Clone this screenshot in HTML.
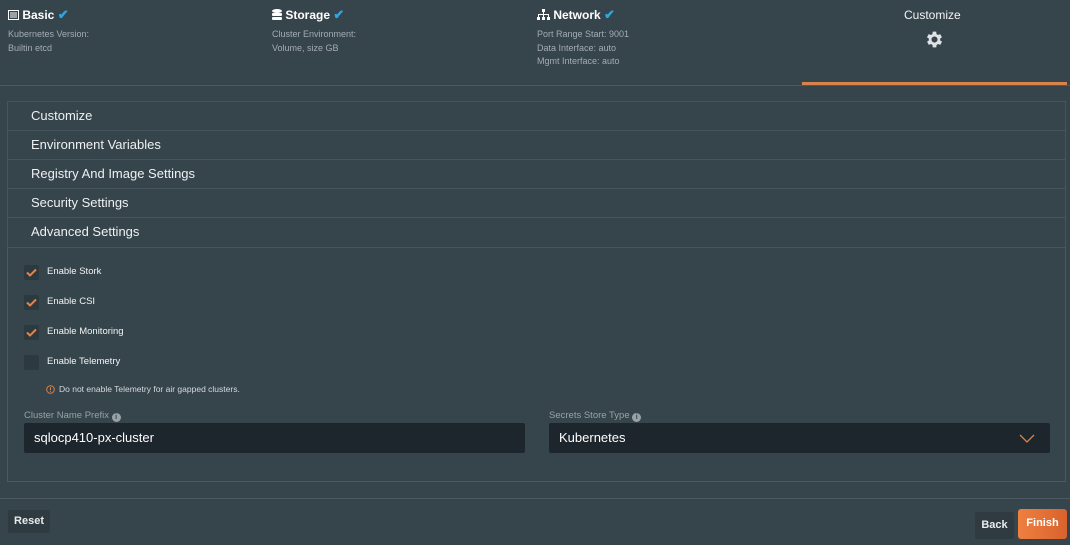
<!DOCTYPE html>
<html><head><style>
*{margin:0;padding:0;box-sizing:border-box}
body{width:1070px;height:545px;background:#36444c;font-family:"Liberation Sans",sans-serif;color:#e8ecee;position:relative;overflow:hidden}
.a{position:absolute}
.st{font-size:12px;font-weight:bold;color:#fff}
.sub{font-size:9px;color:#a4adb2;line-height:13.5px}
.chk{color:#2ea7e0;font-size:13px}
.row{position:absolute;left:7px;width:1059px;border:1px solid #46545c;border-bottom:none;height:29px;font-size:13px;padding:6px 0 0 23px;color:#eef1f2}
.cb{position:absolute;left:24px;width:15px;height:15px;background:#2c393f;border-radius:2px}
.cl{position:absolute;left:47px;font-size:9.5px;color:#f2f4f5}
.inp{position:absolute;top:423px;height:30px;background:#1c262c;border-radius:2px;font-size:13px;padding:7px 10px;color:#fff}
.lbl{position:absolute;top:410px;font-size:9.5px;color:#98a2a7}
.i{display:inline-block;width:9px;height:9px;border-radius:50%;background:#98a2a7;color:#36444c;font-size:7px;text-align:center;line-height:9px;font-weight:bold;vertical-align:-1px}
</style></head><body>
<div class="a st" style="left:8px;top:7px"><svg width="11" height="10" style="vertical-align:-1px"><rect x="0.5" y="0.5" width="10" height="9" fill="none" stroke="#fff"/><path d="M2 3h7M2 5h7M2 7h7" stroke="#fff"/></svg> Basic <span class="chk">✔</span></div>
<div class="a sub" style="left:8px;top:28px">Kubernetes Version:<br>Builtin etcd</div>
<div class="a st" style="left:272px;top:7px"><svg width="10" height="11" style="vertical-align:-1px"><ellipse cx="5" cy="2" rx="5" ry="2" fill="#fff"/><rect x="0" y="4" width="10" height="3" rx="1" fill="#fff"/><rect x="0" y="8" width="10" height="3" rx="1" fill="#fff"/></svg> Storage <span class="chk">✔</span></div>
<div class="a sub" style="left:272px;top:28px">Cluster Environment:<br>Volume, size GB</div>
<div class="a st" style="left:537px;top:7px"><svg width="13" height="11" style="vertical-align:-1px" fill="#fff"><rect x="5" y="0" width="3" height="3"/><rect x="6" y="3" width="1" height="3"/><rect x="1" y="5" width="11" height="1"/><rect x="1" y="5" width="1" height="3"/><rect x="11" y="5" width="1" height="3"/><rect x="0" y="8" width="3" height="3"/><rect x="5" y="8" width="3" height="3"/><rect x="10" y="8" width="3" height="3"/><rect x="6" y="6" width="1" height="2"/></svg> Network <span class="chk">✔</span></div>
<div class="a sub" style="left:537px;top:28px">Port Range Start: 9001<br>Data Interface: auto<br>Mgmt Interface: auto</div>
<div class="a" style="left:904px;top:8px;font-size:12px;color:#f2f4f5">Customize</div>
<svg class="a" style="left:924px;top:29px" width="21" height="21" viewBox="0 0 24 24"><path fill="#dfe3e5" d="M19.4 13a7.5 7.5 0 000-2l2.1-1.6-2-3.5-2.5 1a7.5 7.5 0 00-1.7-1L15 3h-4l-.4 2.9a7.5 7.5 0 00-1.7 1l-2.5-1-2 3.5L6.6 11a7.5 7.5 0 000 2l-2.1 1.6 2 3.5 2.5-1a7.5 7.5 0 001.7 1L11 21h4l.4-2.9a7.5 7.5 0 001.7-1l2.5 1 2-3.5zM13 15.5a3.5 3.5 0 110-7 3.5 3.5 0 010 7z" transform="translate(-1 0)"/></svg>
<div class="a" style="left:0;top:85px;width:1070px;height:1px;background:#4b5960"></div>
<div class="a" style="left:802px;top:82px;width:265px;height:3px;background:#d9824c"></div>
<div class="row" style="top:101px">Customize</div>
<div class="row" style="top:130px">Environment Variables</div>
<div class="row" style="top:159px">Registry And Image Settings</div>
<div class="row" style="top:188px">Security Settings</div>
<div class="row" style="top:217px;border-bottom:1px solid #46545c;height:31px">Advanced Settings</div>
<div class="a" style="left:7px;top:247px;width:1059px;height:235px;border:1px solid #4b5960;border-top:none"></div>
<div class="cb" style="top:265px"></div><svg class="a" style="left:26px;top:268px" width="11" height="9"><path d="M1 4.5l3 3 6-6" stroke="#e5834a" stroke-width="2" fill="none"/></svg><div class="cl" style="top:266px">Enable Stork</div>
<div class="cb" style="top:295px"></div><svg class="a" style="left:26px;top:298px" width="11" height="9"><path d="M1 4.5l3 3 6-6" stroke="#e5834a" stroke-width="2" fill="none"/></svg><div class="cl" style="top:296px">Enable CSI</div>
<div class="cb" style="top:325px"></div><svg class="a" style="left:26px;top:328px" width="11" height="9"><path d="M1 4.5l3 3 6-6" stroke="#e5834a" stroke-width="2" fill="none"/></svg><div class="cl" style="top:326px">Enable Monitoring</div>
<div class="cb" style="top:355px"></div><div class="cl" style="top:356px">Enable Telemetry</div>
<svg class="a" style="left:46px;top:385px" width="9" height="9"><circle cx="4.5" cy="4.5" r="3.8" fill="none" stroke="#d9824c" stroke-width="1"/><path d="M4.5 2.3v2.8M4.5 6v0.9" stroke="#d9824c" stroke-width="1"/></svg>
<div class="a" style="left:59px;top:384px;font-size:8.5px;color:#d5dadc">Do not enable Telemetry for air gapped clusters.</div>
<div class="lbl" style="left:24px">Cluster Name Prefix <span class="i">i</span></div>
<div class="inp" style="left:24px;width:501px">sqlocp410-px-cluster</div>
<div class="lbl" style="left:549px">Secrets Store Type <span class="i">i</span></div>
<div class="inp" style="left:549px;width:501px">Kubernetes<svg style="position:absolute;right:15px;top:11px" width="16" height="9"><path d="M1 1l7 7 7-7" stroke="#d9824c" stroke-width="1.3" fill="none"/></svg></div>
<div class="a" style="left:0;top:498px;width:1070px;height:1px;background:#4b5960"></div>
<div class="a" style="left:8px;top:510px;width:42px;height:23px;background:#2f3b41;border-radius:2px;font-size:11px;font-weight:bold;text-align:center;line-height:23px">Reset</div>
<div class="a" style="left:975px;top:512px;width:39px;height:27px;background:#2f3b41;border-radius:2px;font-size:11px;font-weight:bold;text-align:center;line-height:27px">Back</div>
<div class="a" style="left:1018px;top:509px;width:49px;height:30px;background:linear-gradient(90deg,#ef8040,#d9622e);border-radius:3px;font-size:11px;font-weight:bold;text-align:center;line-height:28px;color:#fff">Finish</div>
</body></html>
